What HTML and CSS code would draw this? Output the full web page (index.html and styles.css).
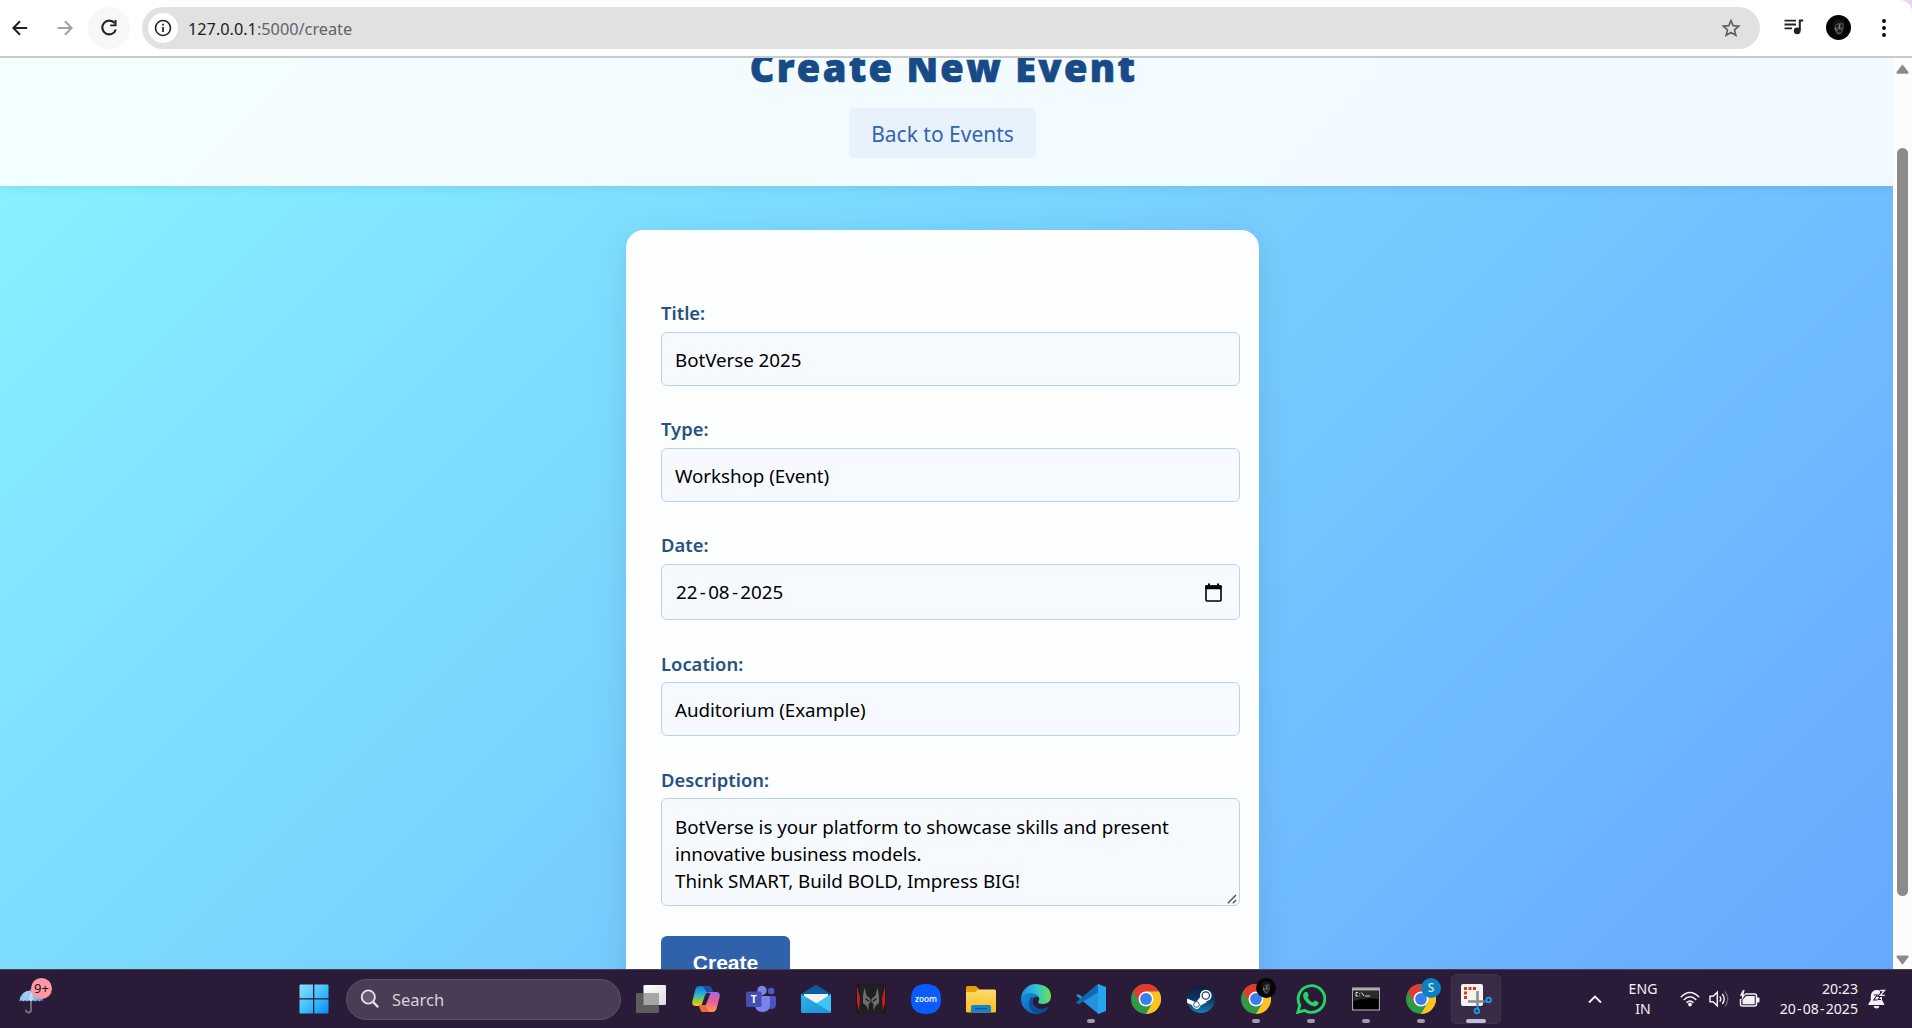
FILE: index.html
```html
<!DOCTYPE html>
<html lang="en">
<head>
<meta charset="utf-8">
<title>Create New Event</title>
<link rel="stylesheet" href="styles.css">
</head>
<body>
<svg class="defs" width="0" height="0" aria-hidden="true">
  <defs>
    <linearGradient id="win" x1="0" y1="0" x2="1" y2="1"><stop offset="0" stop-color="#8be2ff"/><stop offset=".5" stop-color="#41c0fb"/><stop offset="1" stop-color="#0a8cf5"/></linearGradient>
    <linearGradient id="umb" x1="0" y1="0" x2="1" y2="0"><stop offset="0" stop-color="#7fc0f8"/><stop offset=".5" stop-color="#b8dcfb"/><stop offset="1" stop-color="#2b86de"/></linearGradient>
    <linearGradient id="tv" x1="0" y1="0" x2="1" y2="1"><stop offset="0" stop-color="#fff"/><stop offset="1" stop-color="#dcdcdc"/></linearGradient>
    <linearGradient id="cpa" x1="0" y1="0" x2="0" y2="1"><stop offset="0" stop-color="#1577d8"/><stop offset=".4" stop-color="#24b3d8"/><stop offset=".7" stop-color="#8cc84b"/><stop offset="1" stop-color="#f5c51c"/></linearGradient>
    <linearGradient id="cpb" x1="0" y1="0" x2="0" y2="1"><stop offset="0" stop-color="#a26be8"/><stop offset=".5" stop-color="#ee5f96"/><stop offset="1" stop-color="#ff9b55"/></linearGradient>
    <linearGradient id="mail" x1="0" y1="0" x2="1" y2="1"><stop offset="0" stop-color="#2bb3ea"/><stop offset="1" stop-color="#1d8fdc"/></linearGradient>
    <linearGradient id="fold" x1="0" y1="0" x2="0" y2="1"><stop offset="0" stop-color="#ffdc6e"/><stop offset="1" stop-color="#fbbc1a"/></linearGradient>
    <linearGradient id="edgea" x1="0" y1="0" x2="1" y2="0"><stop offset="0" stop-color="#1c8fdc"/><stop offset=".5" stop-color="#2fc1d6"/><stop offset="1" stop-color="#6ae34e"/></linearGradient>
    <linearGradient id="edgeb" x1="0" y1="0" x2="1" y2="1"><stop offset="0" stop-color="#1290e0"/><stop offset="1" stop-color="#0d519f"/></linearGradient>
    <linearGradient id="steam" x1="0" y1="0" x2="0" y2="1"><stop offset="0" stop-color="#101d3b"/><stop offset=".5" stop-color="#0d3461"/><stop offset="1" stop-color="#1281b4"/></linearGradient>
    <symbol id="chrome" viewBox="0 0 30 30">
      <circle cx="15" cy="15" r="15" fill="#2e9a47"/>
      <path d="M2 7.5A15 15 0 0 1 28 7.5H15L8.5 18.7Z" fill="#e33b2e"/>
      <path d="M28 7.5A15 15 0 0 1 15 30L21.5 18.7 15 7.5Z" fill="#fcc31e"/>
      <circle cx="15" cy="15" r="7.5" fill="#fff"/>
      <circle cx="15" cy="15" r="5.9" fill="#3b7ded"/>
    </symbol>
    <symbol id="face" viewBox="0 0 25 25">
      <circle cx="12.5" cy="12.5" r="12.5" fill="#050505"/>
      <path d="M8 9Q9 5 13 5T18 10Q18 16 15 19Q12 21 10 18Q8 14 8 9Z" fill="#444"/>
      <path d="M7 11Q7 4 13 4T19 9Q15 7 12 8T8 13Z" fill="#141414"/>
      <path d="M10 11h2.5M14.5 11H17M12 16h3" stroke="#0a0a0a" stroke-width="1.3"/>
      <path d="M13.5 9.5v4M9 13l1 3" stroke="#8a8a8a" stroke-width="1"/>
    </symbol>
  </defs>
</svg>

<header class="toolbar">
  <svg class="nav back" width="16" height="16" viewBox="0 0 16 16"><path d="M15.2 8H1.6M8 1.2L1.4 8 8 14.8" fill="none" stroke="#202124" stroke-width="2"/></svg>
  <svg class="nav forward" width="16" height="16" viewBox="0 0 16 16"><path d="M.5 8H14M8 1.2L14.6 8 8 14.8" fill="none" stroke="#a2a2a2" stroke-width="2"/></svg>
  <span class="reload"><svg width="18" height="18" viewBox="0 0 18 18"><path d="M14.6 4.2A6.9 6.9 0 1 0 15.8 10.5" fill="none" stroke="#202124" stroke-width="2.1"/><path d="M16.5 1v6.3h-6.3V5.4h4.3V1Z" fill="#202124"/></svg></span>
  <div class="address">
    <span class="info"><svg width="18" height="18" viewBox="0 0 18 18"><circle cx="9" cy="9" r="7.5" fill="none" stroke="#202124" stroke-width="1.6"/><path d="M9 8v5M9 4.8v1.8" stroke="#202124" stroke-width="1.7"/></svg></span>
    <span class="url"><b>127.0.0.1</b>:5000/create</span>
    <svg class="star" width="20" height="20" viewBox="0 0 20 20"><path d="M10 2.6l2.2 5.1 5.5.5-4.2 3.7 1.3 5.4L10 14.4l-4.8 2.9 1.3-5.4-4.2-3.7 5.5-.5Z" fill="none" stroke="#5f6163" stroke-width="1.7"/></svg>
  </div>
  <svg class="media" width="20" height="16" viewBox="0 0 20 16"><path d="M.5 1.7h11.5M.5 5.5h11.5M.5 9.3h7.5" stroke="#202124" stroke-width="1.8"/><path d="M15.8 11.6V1.6h3.4" fill="none" stroke="#202124" stroke-width="2"/><circle cx="13.2" cy="11.8" r="3.4" fill="#202124"/></svg>
  <svg class="avatar" width="25" height="25"><use href="#face"/></svg>
  <svg class="dots" width="4" height="18" viewBox="0 0 4 18"><circle cx="2" cy="2" r="1.9"/><circle cx="2" cy="9" r="1.9"/><circle cx="2" cy="16" r="1.9"/></svg>
</header>

<div class="window">
  <div class="viewport">
    <div class="page">
      <div class="hero">
        <h1>Create New Event</h1>
        <a class="back-link">Back to Events</a>
      </div>
      <main class="content">
        <div class="card">
          <div class="group"><span class="label">Title:</span><div class="field">BotVerse 2025</div></div>
          <div class="group"><span class="label">Type:</span><div class="field">Workshop (Event)</div></div>
          <div class="group"><span class="label">Date:</span><div class="field date"><span>22<i>-</i>08<i>-</i>2025</span><svg width="17" height="19" viewBox="0 0 17 19"><path d="M1 3.2h15V17a1 1 0 0 1-1 1H2a1 1 0 0 1-1-1Z" fill="none" stroke="#000" stroke-width="1.6"/><path d="M.5 2.3h16v4H.5ZM3 .5h2V3H3ZM12 .5h2V3h-2Z"/></svg></div></div>
          <div class="group"><span class="label low">Location:</span><div class="field">Auditorium (Example)</div></div>
          <div class="group last"><span class="label low">Description:</span><div class="field area">BotVerse is your platform to showcase skills and present<br>innovative business models.<br>Think SMART, Build BOLD, Impress BIG!<svg class="grip" width="10" height="10" viewBox="0 0 10 10"><path d="M.8 9.2L9 1M5.8 9.2L9 6" stroke="#4b4b4b" stroke-width="1.4"/></svg></div></div>
          <div class="submit">Create</div>
        </div>
      </main>
    </div>
  </div>
  <div class="scrollbar">
    <svg width="13" height="10" viewBox="0 0 13 10"><path d="M6.5 .5L12.5 8Q13 9.7 11.5 9.7H1.5Q0 9.7 .5 8Z" fill="#8b8b8b"/></svg>
    <div class="thumb"></div>
    <svg width="13" height="10" viewBox="0 0 13 10"><path d="M6.5 9.7L12.5 2Q13 .4 11.5 .4H1.5Q0 .4 .5 2Z" fill="#8b8b8b"/></svg>
  </div>
</div>

<footer class="taskbar">
  <div class="weather">
    <svg width="26" height="28" viewBox="0 0 26 28"><path d="M12 3v20.5q0 3-2.6 3T7 23.500" fill="none" stroke="#77777c" stroke-width="1.8"/><path d="M.3 15.500Q1.500 4.500 12 4.500T24.500 15.500q-2-2-4.200 0-2-2-4.100 0-2-2-4.200 0-2-2-4 0-1.800-2-3.800 0-2-1.800-3.900 0Z" fill="url(#umb)"/><path d="M12 4.500Q8 9 8 15M12 4.500Q16 9 16.200 15" stroke="#5fa8ea" stroke-width=".7" fill="none"/></svg>
    <span class="badge">9+</span>
  </div>
  <svg class="start" width="30" height="30" viewBox="0 0 30 30"><path d="M1.500 .5H14v13.800H.5V1.500q0-1 1-1ZM15.300.5h13.200q1 0 1 1v12.800H15.300ZM.5 15.600H14v13.900H1.500q-1 0-1-1ZM15.300 15.600h14.200v12.900q0 1-1 1H15.300Z" fill="url(#win)"/></svg>
  <div class="search">
    <svg width="20" height="20" viewBox="0 0 20 20"><circle cx="8.300" cy="8" r="6.600" fill="#655a70" stroke="#e4e1e6" stroke-width="1.900"/><path d="M13 12.900l5.200 5.400" stroke="#e4e1e6" stroke-width="2.300"/></svg>
    <span>Search</span>
  </div>
  <div class="apps">
    <span class="app"><svg width="30" height="30" viewBox="0 0 30 30"><rect x="7.500" y="1" width="22.500" height="20" rx="1.200" fill="url(#tv)"/><rect x="0" y="9" width="23" height="20" rx="1.200" fill="#5d5d5d"/><path d="M7.500 9H23v12H7.500Z" fill="#a6a6a6"/></svg></span>
    <span class="app"><svg width="30" height="30" viewBox="0 0 30 30"><path d="M8.500 2H17q3 0 4 3.500l1 3.500h-4.500q-3 0-3.800 3L11.500 19q-.9 3-3.500 3H5Q.5 22 1.300 17.500L4.200 6Q5.300 2 8.500 2Z" fill="url(#cpa)"/><path d="M9.500 2H17q3 0 4 3.500l1 3.500h-4q-3-.2-4.200-4Q12.500 2 9.500 2Z" fill="#174ea8"/><path d="M21.500 28H13q-3 0-4-3.500L8 21q3.200 1 4-2l2.300-7q1-4 4.200-4H25q4.500 0 3.700 4.500L25.800 24q-1.100 4-4.300 4Z" fill="url(#cpb)"/><path d="M20.500 28H13q-3 0-4-3.500L8 21h4q3 .2 4.200 4 1.300 3 4.300 3Z" fill="#f6643c"/><path d="M15.500 9h4l-4.800 12h-4Z" fill="#2c1c3b"/></svg></span>
    <span class="app"><svg width="30" height="30" viewBox="0 0 30 30"><circle cx="25.200" cy="7" r="3.200" fill="#5059c9"/><path d="M20 12h8.500q1.500 0 1.500 1.500V20q0 5-5 5h-3Z" fill="#4b53bc"/><circle cx="16" cy="6.500" r="4.700" fill="#7b83eb"/><path d="M9 12h13.500q1.500 0 1.500 1.500V20q0 8-7.500 8T9 20Z" fill="#7b83eb"/><rect x="0" y="7.500" width="15.500" height="15.500" rx="1.600" fill="#454eb4"/><text x="7.800" y="19.300" class="teams-t">T</text></svg></span>
    <span class="app"><svg width="30" height="30" viewBox="0 0 30 30"><path d="M0 10L15 .8 30 10 15 21Z" fill="#0c5ba5"/><path d="M3 10h24v9H3Z" fill="#f2f2f2"/><path d="M30 10v17.500q0 1.500-1.500 1.500h-27L15 19.500Z" fill="#3bc7f3"/><path d="M0 10l30 18.200q-.5.800-1.500.8h-27Q0 29 0 27.500Z" fill="url(#mail)"/></svg></span>
    <span class="app"><svg width="30" height="30" viewBox="0 0 30 30"><rect width="30" height="30" rx="3" fill="#1b1b1b"/><path d="M1 2l3 12-1 13-2-8ZM29 2l-3 12 1 13 2-8Z" fill="#d11a21"/><path d="M4 1h22v28H4Z" fill="#202020"/><path d="M8.500 3.500l2 8 4 3.500v3l-2 2v6.500l-2-4.500-3.500-3v-7ZM21.500 3.500l-2 8-4 3.500v3l2 2v6.500l2-4.500 3.500-3v-7Z" fill="#6f6f6f"/><path d="M9.500 14.500l3.500 3M20.500 14.500l-3.500 3" stroke="#222" stroke-width="1.500"/></svg></span>
    <span class="app"><svg width="30" height="30" viewBox="0 0 30 30"><path d="M15 0Q30 0 30 15T15 30 0 15 15 0Z" fill="#0b5cff"/><text x="15" y="17.800" class="zoom-t">zoom</text></svg></span>
    <span class="app"><svg width="30" height="30" viewBox="0 0 30 30"><path d="M0 3.500Q0 2 1.500 2H9q1 0 1.800.8L13 5v5H0Z" fill="#e59f0a"/><path d="M0 8h9.500l2.800-2.500H28.500Q30 5.500 30 7v20q0 1.500-1.500 1.500h-27Q0 28.500 0 27Z" fill="url(#fold)"/><path d="M5 28.500V23q0-2 2-2h16q2 0 2 2v5.500Z" fill="#1383d3"/><path d="M9 24.700h12" stroke="#0b4f8b" stroke-width="1.200"/></svg></span>
    <span class="app"><svg width="30" height="30" viewBox="0 0 30 30"><path d="M0 15A15 15 0 0 1 15 0Q30 1 30 12.500 29.500 20 21.500 20q-5 0-4.200-2.500 2-2.500 0-5Q15 9.500 10 10.500 3 11 0 15Z" fill="url(#edgea)"/><path d="M0 15Q2 8.500 9.500 9q6.500.5 8.300 4.500-3.500-2-5.800 1-2 5 3 9 5 3.500 12.500-.5Q23 30 15 30A15 15 0 0 1 0 15Z" fill="url(#edgeb)"/><path d="M10.500 12.500Q5 21 11 27q2.500 2.500 6 2.800 7-.5 10.500-6.800-7.500 4-12.500.5-5-4-3-9Z" fill="#0c4d94"/></svg></span>
    <span class="app run"><svg width="30" height="30" viewBox="0 0 30 30"><path d="M22 0L7 13.500 2.500 10 0 11.500 22.500 30V22Z" fill="#2292dc"/><path d="M22 0L7 15 2.500 20 0 18.500 22 0Z" fill="#1b80c8"/><path d="M0 18.500L22 0v8L3 20.200Z" fill="#0a6bb3"/><path d="M22 0l8 3v24l-8 3Z" fill="#27a4f0"/></svg></span>
    <span class="app"><svg width="30" height="30"><use href="#chrome"/></svg></span>
    <span class="app"><svg width="30" height="30" viewBox="0 0 30 30"><circle cx="15" cy="15" r="14" fill="url(#steam)"/><path d="M1 14.500l9 3.800 5-6.300 6 6-6.500 3.500Q13 26 9 24.500 6.500 23 6 21L1.200 19Z" fill="#fff"/><circle cx="19.800" cy="11.500" r="5.800" fill="#fff"/><circle cx="19.800" cy="11.500" r="3.700" fill="none" stroke="#123a64" stroke-width="1.200"/><circle cx="10.500" cy="20.500" r="2.800" fill="none" stroke="#174b76" stroke-width=".9"/></svg></span>
    <span class="app run"><svg width="30" height="30"><use href="#chrome"/></svg><svg class="overlay" width="20" height="20"><use href="#face"/></svg></span>
    <span class="app run"><svg width="30" height="30" viewBox="0 0 30 30"><path d="M1.800 28.300l2-7A13.300 13.300 0 1 1 8.700 26.400Z" fill="none" stroke="#25d366" stroke-width="2.900"/><path d="M10.500 7.800q.8 0 1.200 1l1 2.500q.2.700-1.200 2.200 2.200 4 5.500 5 1.500-2 2.100-1.900l3 1.500q.8.400.2 2-1.200 2.600-4.200 2.400-4-.5-7.500-4T7 11.800q.3-4 3.500-4Z" fill="#25d366"/></svg></span>
    <span class="app run"><svg width="28" height="24" viewBox="0 0 28 24"><rect x=".5" y="1" width="27" height="22" fill="#000" stroke="#a3a7a9" stroke-width="1.200"/><path d="M1 1.200h26v2.300H1Z" fill="#b5b9bc"/><path d="M1.500 4h25v8Q14 10 1.500 14Z" fill="#2b2b2b"/><path d="M6 5.500H4v3.500h2M7.600 6v.8M7.600 8v.8M9.500 5.500l2.500 3.500M13 9h5" fill="none" stroke="#ddd" stroke-width="1"/></svg></span>
    <span class="app run"><svg width="30" height="30"><use href="#chrome"/></svg><span class="overlay initial">S</span></span>
    <span class="app run active"><svg width="32" height="32" viewBox="0 0 32 32"><rect x="1" y="1" width="22" height="22" rx="2" fill="#f4f3f3"/><path d="M4 4h3v3H4ZM8.500 4h3v3h-3ZM13 4h3v3h-3ZM4 8.500h3v3H4ZM4 13h3v3H4Z" fill="#d8400f"/><path d="M17.500 8v13M8 18.500h16" stroke="#8c8c8c" stroke-width="2.500"/><path d="M17.500 21v5M23 18.500h4" stroke="#1e90d8" stroke-width="2.200"/><circle cx="16.800" cy="28" r="2.300" fill="none" stroke="#2299e0" stroke-width="1.800"/><circle cx="28.700" cy="17" r="2.300" fill="none" stroke="#2299e0" stroke-width="1.800"/></svg></span>
  </div>
  <div class="tray">
    <svg class="chevron" width="14" height="9" viewBox="0 0 14 9"><path d="M1 7.500l6-6 6 6" fill="none" stroke="#f3f1f5" stroke-width="1.900"/></svg>
    <div class="lang"><span>ENG</span><span>IN</span></div>
    <svg class="wifi" width="20" height="16" viewBox="0 0 20 16"><path d="M.8 6.200Q10-3.400 19.200 6.200M3.700 9Q10 2.600 16.300 9M6.500 11.800Q10 8.200 13.500 11.800" fill="none" stroke="#f3f1f5" stroke-width="1.500"/><circle cx="10" cy="13.500" r="1.900" fill="#f3f1f5"/></svg>
    <svg class="volume" width="21" height="18" viewBox="0 0 21 18"><path d="M1 6.300h3l4.300-4v13.400L4 11.700H1Z" fill="none" stroke="#f3f1f5" stroke-width="1.500"/><path d="M10.800 6.300q2 2.700 0 5.400M13.300 4q3.800 5 0 10" fill="none" stroke="#f3f1f5" stroke-width="1.400"/><path d="M16 1.500q5.500 7.500 0 15" fill="none" stroke="#6d6177" stroke-width="1.400"/></svg>
    <svg class="battery" width="21" height="18" viewBox="0 0 21 18"><path d="M6 4h9.500q2 0 2 2v8q0 2-2 2h-12q-2 0-2-2v-5" fill="none" stroke="#f3f1f5" stroke-width="1.500"/><path d="M7 6h8.700v8.200H3.500V10ZM18 7.500h1.500q1 0 1 1v3q0 1-1 1H18ZM4-.2L.8 5.700H3L2.500 10.500 6.500 4.200H4.500L5.700-.2Z" fill="#f3f1f5"/></svg>
    <div class="clock"><span>20:23</span><span>20<i>-</i>08<i>-</i>2025</span></div>
    <svg class="bell" width="18" height="20" viewBox="0 0 18 20"><path d="M8.500 1Q2.800 1.500 2.800 7.500V11L.4 15v1h15.800v-1L14 11V8H9L12 4V1.500Q10.500.9 8.500 1ZM5.500 17h6q-.7 2.600-3 2.600T5.500 17Z" fill="#f3f1f5"/><path d="M5.700 6h3.600l-3.600 5h3.800M10.300 6.500h2.500l-2.500 4h2.700" fill="none" stroke="#2a1b38" stroke-width="1.100"/><path d="M12.300 1.500h4.200l-4.200 4.800h4.500" fill="none" stroke="#f3f1f5" stroke-width="1.300"/></svg>
  </div>
</footer>
</body>
</html>
```
FILE: styles.css
```css
* { box-sizing: border-box; }
body {
  margin: 0;
  width: 1912px;
  height: 1028px;
  overflow: hidden;
  display: flex;
  flex-direction: column;
  background: #e6d3f8;
  font-family: "Noto Sans", "Open Sans", sans-serif;
}
svg { display: block; flex: none; }
i { font-style: normal; }
.defs { position: absolute; }

/* Browser toolbar */
.toolbar {
  height: 58px;
  flex: none;
  display: flex;
  align-items: center;
  padding: 0 26px 0 12px;
  background: #fff;
  border-bottom: 2px solid #c9cbc9;
  border-top-right-radius: 12px;
}
.forward { margin-left: 29px; }
.reload {
  width: 42px;
  height: 42px;
  margin-left: 15px;
  border-radius: 50%;
  background: #f7f7f7;
  display: flex;
  align-items: center;
  justify-content: center;
}
.address {
  width: 1620px;
  height: 42px;
  margin-left: 12px;
  padding: 0 19px 0 6px;
  display: flex;
  align-items: center;
  background: #e1e1e1;
  border-radius: 21px;
}
.info {
  width: 30px;
  height: 30px;
  border-radius: 50%;
  background: #fff;
  display: flex;
  align-items: center;
  justify-content: center;
}
.url {
  margin-left: 10px;
  padding-top: 1px;
  flex: 1;
  font-size: 16.3px;
  color: #606367;
}
.url b { font-weight: 400; color: #1f2023; }
.media { margin-left: 24px; margin-top: -2px; }
.avatar { margin-left: 22px; margin-top: -1px; }
.dots { margin-left: 31px; margin-top: -1px; }

/* Page viewport, scrolled down by 86px */
.window { flex: none; height: 911px; display: flex; }
.viewport { flex: 1; overflow: hidden; }
.page {
  margin-top: -86px;
  height: 1063px;
  background: linear-gradient(135deg, #89f7fe 0%, #66a6ff 100%);
}
.hero {
  height: 214px;
  padding: 71px 8px 0 0;
  display: flex;
  flex-direction: column;
  align-items: center;
  background: rgba(255, 255, 255, 0.9);
  box-shadow: 0 2px 10px rgba(0, 0, 0, 0.07);
}
.hero h1 {
  margin: 0 0 0 2px;
  font: 800 38px/49px "Open Sans", "Noto Sans", sans-serif;
  letter-spacing: 2.3px;
  color: #174a86;
  -webkit-text-stroke: 0.7px #174a86;
}
.back-link {
  width: 187px;
  height: 50px;
  margin-top: 16px;
  border-radius: 5px;
  background: #e8f2fc;
  color: #3464ae;
  font-size: 21px;
  line-height: 53px;
  text-align: center;
}
.content { padding: 44px 8px 0 0; }
.card {
  width: 633px;
  height: 780px;
  margin: 0 auto;
  padding: 68px 19px 0 35px;
  border-radius: 18px;
  background: rgba(255, 255, 255, 0.985);
  box-shadow: 0 8px 32px rgba(0, 0, 0, 0.1);
}
.group { margin-bottom: 28px; }
.label {
  display: block;
  height: 34px;
  line-height: 30px;
  font-size: 18.4px;
  font-weight: 600;
  color: #27517f;
}
.low { line-height: 32px; }
.field {
  height: 54px;
  padding: 0 13px;
  border: 1px solid #b5d3f4;
  border-radius: 6px;
  background: #f6fafe;
  font-size: 18.8px;
  letter-spacing: -0.05px;
  line-height: 54px;
  color: #000;
}
.date {
  height: 56px;
  padding: 0 17px 0 14px;
  display: flex;
  align-items: center;
  justify-content: space-between;
}
.date i { margin: 0 2.4px; }
.area {
  position: relative;
  height: 108px;
  padding-top: 15px;
  line-height: 27px;
  white-space: nowrap;
}
.grip { position: absolute; right: 2px; bottom: 1px; }
.last { margin-bottom: 30px; }
.submit {
  width: 129px;
  height: 55px;
  border-radius: 6px;
  background: #3062ac;
  color: #fff;
  font: bold 21px/54px "Liberation Sans", Arial, sans-serif;
  text-align: center;
}

/* Scrollbar */
.scrollbar {
  width: 19px;
  padding: 6px 0 4px;
  display: flex;
  flex-direction: column;
  align-items: center;
  background: #fcfcfc;
}
.thumb {
  width: 11px;
  height: 748px;
  margin: 74px 0 59px;
  border-radius: 6px;
  background: #8b8b8b;
}

/* Taskbar */
.taskbar {
  height: 59px;
  flex: none;
  display: flex;
  align-items: center;
  background: #2a1b38;
  border-top: 1px solid #46404d;
}
.weather { position: relative; margin-left: 19px; width: 280px; padding-top: 1px; }
.badge {
  position: absolute;
  left: 12px;
  top: -7px;
  width: 21px;
  height: 21px;
  border-radius: 50%;
  background: #ff98a2;
  color: #1a1014;
  font-size: 13px;
  line-height: 21px;
  text-align: center;
}
.search {
  width: 275px;
  height: 41px;
  margin-left: 17px;
  padding-left: 13px;
  display: flex;
  align-items: center;
  border: 1px solid #5e5169;
  border-radius: 21px;
  background: #493c55;
  color: #d6d2da;
  font-size: 16.5px;
}
.search span { margin-left: 12px; }
.apps { display: flex; margin-left: 2px; }
.app {
  position: relative;
  width: 55px;
  height: 50px;
  display: flex;
  align-items: center;
  justify-content: center;
}
.run::after {
  content: "";
  position: absolute;
  bottom: 1px;
  left: 23.5px;
  width: 8px;
  height: 4px;
  border-radius: 2px;
  background: #a19aa9;
}
.active { width: 50px; margin-left: 3px; border: 1px solid #40334c; border-radius: 5px; background: #392b46; }
.active::after { left: 14px; width: 20px; bottom: 0; background: #bcbfe0; }
.overlay { position: absolute; left: 28px; top: 4px; }
.initial {
  width: 20px;
  height: 20px;
  border-radius: 50%;
  background: #0d80c4;
  color: #cfe9f7;
  font-size: 12px;
  font-weight: 500;
  line-height: 20px;
  text-align: center;
}
.teams-t { font: bold 10.5px "Open Sans", sans-serif; fill: #fff; text-anchor: middle; }
.zoom-t { font: 600 8.4px "Open Sans", sans-serif; fill: #fff; text-anchor: middle; }
.tray {
  flex: 1;
  display: flex;
  align-items: center;
  color: #f3f1f5;
  font-size: 14.1px;
  line-height: 20px;
}
.chevron { margin-left: 87px; }
.lang, .clock { display: flex; flex-direction: column; }
.lang { width: 40px; margin-left: 21px; align-items: center; }
.wifi { margin-left: 17px; }
.volume { margin-left: 9px; }
.battery { margin-left: 9px; }
.clock { width: 98px; align-items: flex-end; }
.clock i { margin: 0 1.2px; }
.bell { margin-left: 10px; }
```
